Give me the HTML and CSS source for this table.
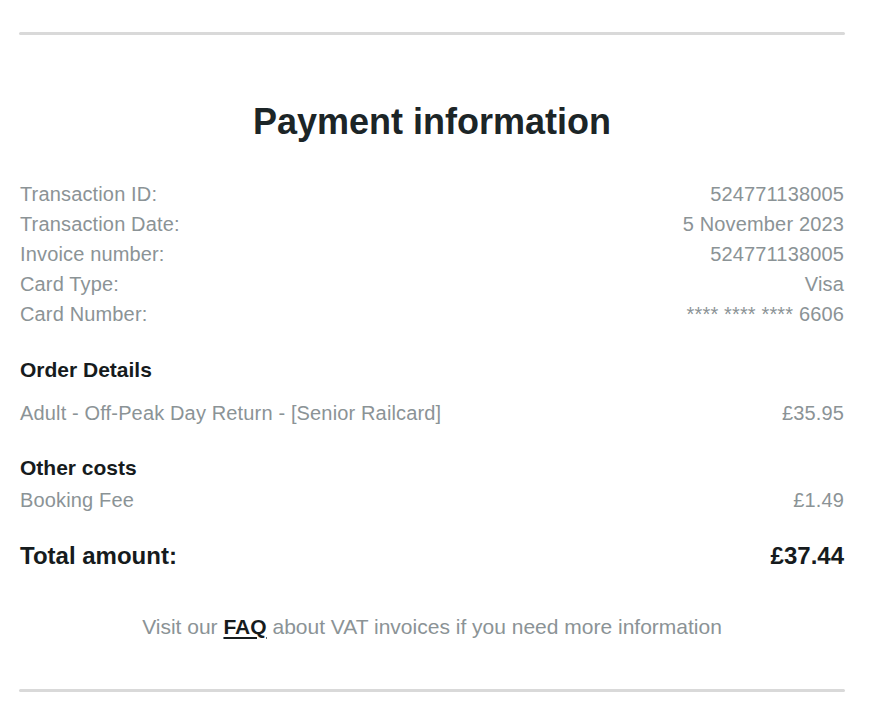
FILE: index.html
```html
<!DOCTYPE html>
<html lang="en">
<head>
<meta charset="utf-8">
<title>Payment information</title>
<link rel="stylesheet" href="styles.css">
</head>
<body>
<div class="page">
  <hr class="rule rule-top">
  <h1 class="title">Payment information</h1>
  <div class="rows">
    <div class="row"><span>Transaction ID:</span><span>524771138005</span></div>
    <div class="row"><span>Transaction Date:</span><span>5 November 2023</span></div>
    <div class="row"><span>Invoice number:</span><span>524771138005</span></div>
    <div class="row"><span>Card Type:</span><span>Visa</span></div>
    <div class="row"><span>Card Number:</span><span>**** **** **** 6606</span></div>
  </div>
  <h2 class="section section-order">Order Details</h2>
  <div class="row row-order"><span>Adult - Off-Peak Day Return - [Senior Railcard]</span><span>£35.95</span></div>
  <h2 class="section section-other">Other costs</h2>
  <div class="row row-fee"><span>Booking Fee</span><span>£1.49</span></div>
  <div class="row total"><span>Total amount:</span><span>£37.44</span></div>
  <p class="note">Visit our <a href="#" class="faq">FAQ</a> about VAT invoices if you need more information</p>
  <hr class="rule rule-bottom">
</div>
</body>
</html>
```
FILE: styles.css
```css
* { box-sizing: border-box; }
html, body { margin: 0; padding: 0; background: #ffffff; }
body {
  font-family: "Liberation Sans", Arial, Helvetica, sans-serif;
  color: #8b9396;
}
.page {
  width: 824px;
  margin-left: 20px;
  padding-top: 32px;
  display: flex;
  flex-direction: column;
}
.rule {
  border: 0;
  height: 3px;
  background: #d9d9d9;
  border-radius: 2px;
  margin: 0 0 0 -1px;
  width: 826px;
}
.title {
  margin: 59px 0 0 0;
  font-size: 36px;
  line-height: 56px;
  font-weight: 700;
  text-align: center;
  color: #1c2527;
}
.rows { margin-top: 29px; display: flex; flex-direction: column; }
.row {
  display: flex;
  justify-content: space-between;
  font-size: 20px;
  line-height: 30px;
  letter-spacing: 0.15px;
  color: #8b9396;
}
.section {
  margin: 0;
  font-size: 21px;
  font-weight: 700;
  line-height: 30px;
  color: #161b1d;
}
.section-order { margin-top: 26px; }
.row-order { margin-top: 13px; }
.section-other { margin-top: 25px; }
.row-fee { margin-top: 2px; }
.total {
  margin-top: 26px;
  font-size: 24px;
  font-weight: 700;
  letter-spacing: 0;
  color: #161b1d;
}
.note {
  margin: 41px 0 0 0;
  text-align: center;
  font-size: 21px;
  line-height: 30px;
  color: #8b9396;
}
.faq {
  color: #161b1d;
  font-weight: 700;
  text-decoration: underline;
  text-decoration-thickness: 2px;
  text-underline-offset: 3px;
}
.rule-bottom { margin-top: 47px; }
```
